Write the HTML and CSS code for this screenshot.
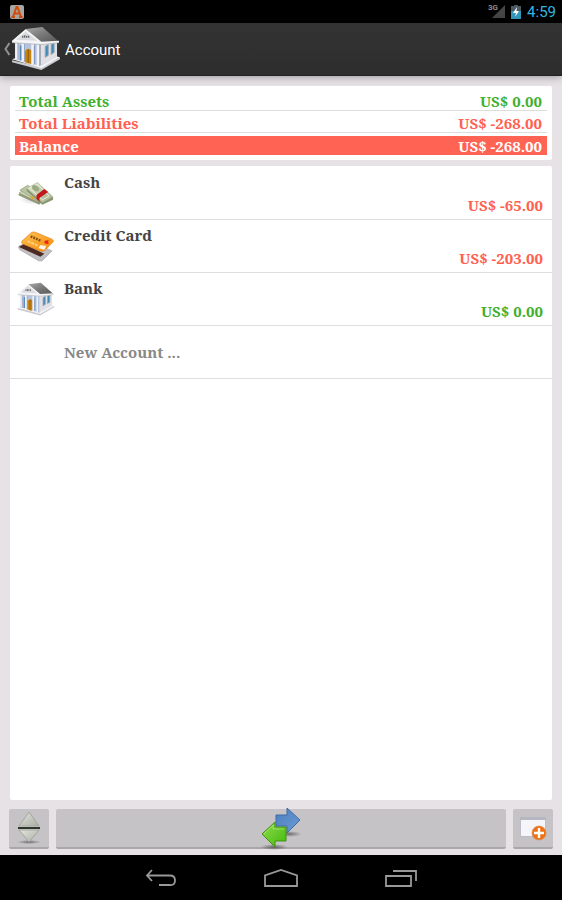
FILE: index.html
```html
<!DOCTYPE html>
<html lang="en">
<head>
<meta charset="utf-8">
<meta name="viewport" content="width=device-width, initial-scale=1">
<title>Account</title>
<link rel="stylesheet" href="styles.css">
</head>
<body>
<svg class="defs" aria-hidden="true">
  <defs>
    <linearGradient id="roof" x1="0" y1="0" x2="1" y2="1"><stop offset="0" stop-color="#aaa"/><stop offset=".5" stop-color="#777"/><stop offset="1" stop-color="#555"/></linearGradient>
    <linearGradient id="money" x1="0" y1="0" x2="1" y2="1"><stop offset="0" stop-color="#dbe2c8"/><stop offset="1" stop-color="#a5b18d"/></linearGradient>
    <linearGradient id="gold" x1="0" y1="0" x2="1" y2="1"><stop offset="0" stop-color="#ffc252"/><stop offset="1" stop-color="#f68b0c"/></linearGradient>
    <linearGradient id="blue" x1="0" y1="0" x2="1" y2="1"><stop offset="0" stop-color="#4a7ec0"/><stop offset="1" stop-color="#6e9cd3"/></linearGradient>
    <linearGradient id="green" x1="0" y1="0" x2="1" y2="1"><stop offset="0" stop-color="#8fdc4c"/><stop offset="1" stop-color="#43b80d"/></linearGradient>
    <linearGradient id="stone" x1="0" y1="0" x2="1" y2="1"><stop offset="0" stop-color="#e4e6de"/><stop offset="1" stop-color="#a9ada2"/></linearGradient>
    <radialGradient id="shade"><stop offset="0" stop-color="#000" stop-opacity=".45"/><stop offset="1" stop-color="#000" stop-opacity="0"/></radialGradient>
  </defs>
  <symbol id="bank" viewBox="0 0 51 45">
    <path d="M1 34l30 7 19-10v2L31 44 1 36z" fill="#c9cbd0"/>
    <path d="M1 33l6-2 24 8 15-9 4 1-19 11z" fill="#f5f5f7"/>
    <path d="M4 14h26v26L4 33z" fill="#b4c4dc"/>
    <path d="M30 15l17-1v17L30 40z" fill="#e0e0e5"/>
    <path d="M14 36V25q3-5 7-1v14z" fill="#c98410"/><path d="M17.500 23v14" stroke="#7b4a05" stroke-width=".8"/>
    <path d="M10 19v15M23 20v18" stroke="#5b86b8" stroke-width="2"/>
    <path d="M5.500 15v18M12 16v19M22 17v21M27.500 17v23" stroke="#f1f3f8" stroke-width="2.600"/>
    <path d="M7 15v18M13.700 16v19M24 17v21M29.300 17v23" stroke="#8398bb" stroke-width=".7"/>
    <path d="M35 20l3-2v11l-3 2zM41 18l3-2v10l-3 2z" fill="#4389b7" stroke="#97a1ae" stroke-width="1"/>
    <path d="M15 2L32 0l17 15-18 1z" fill="url(#roof)"/>
    <path d="M15 2L1 14v2l30 2 18-2v-2l-18 1z" fill="#f5f5f7"/>
    <path d="M15 4.500L5 13l22 1z" fill="#d9dbe0"/>
    <path d="M12 9v2M14 8.500V11M16 9v2M18 9v2" stroke="#555" stroke-width="1.200"/>
    <path d="M1 16l30 2 18-2" fill="none" stroke="#a8abb3" stroke-width=".7"/>
  </symbol>
</svg>

<div class="screen">
  <div class="status">
    <svg class="app-badge" viewBox="0 0 16 16" aria-hidden="true"><rect x="1" y="1" width="14" height="14" rx="2" fill="#aaa6a2"/><path d="M4 13L7.500 3h1L12 13M5 9.500h6M2.500 13H6M10 13h3.500" fill="none" stroke="#cf4d0b" stroke-width="2"/></svg>
    <div class="status-right">
      <span class="network">3G</span>
      <svg class="signal" viewBox="0 0 14 15" aria-hidden="true"><path d="M14 1v13H1z" fill="#454545"/></svg>
      <svg class="battery" viewBox="0 0 10 16" aria-hidden="true"><path d="M3 1h4v1h3v6H0V2h3z" fill="#4b5960"/><path d="M0 7h10v8H0z" fill="#3497bd"/><path d="M6 3L2 9h3l-1 4 4-6H5.500z" fill="#fff"/></svg>
      <time class="clock">4:59</time>
    </div>
  </div>

  <header class="bar">
    <a class="up" href="#" aria-label="Back">
      <svg class="chevron" viewBox="0 0 8 14" aria-hidden="true"><path d="M6.500 1L2.500 7l4 6" fill="none" stroke="#929292" stroke-width="2"/></svg>
      <svg class="bank-large" aria-hidden="true"><use href="#bank"/></svg>
    </a>
    <h1>Account</h1>
  </header>

  <main>
    <dl class="summary">
      <div class="total positive"><dt>Total Assets</dt><dd>US$ 0.00</dd></div>
      <div class="total negative"><dt>Total Liabilities</dt><dd>US$ -268.00</dd></div>
      <div class="total balance"><dt>Balance</dt><dd>US$ -268.00</dd></div>
    </dl>

    <ul class="accounts">
      <li><a class="account" href="#">
        <svg class="icon" viewBox="0 0 39 35" aria-hidden="true">
          <ellipse cx="19" cy="23" rx="17" ry="6" fill="url(#shade)" opacity=".5"/>
          <path d="M1 19L9 12l19 8-5 9z" fill="#8d9877"/><path d="M2 17l9-6 18 10-8 5z" fill="#cdd6b8" stroke="#8a9470" stroke-width=".6"/>
          <path d="M3 14l8-5 17 12-6 5z" fill="#b9c4a0" stroke="#8a9470" stroke-width=".6"/>
          <path d="M10 12l11-6 16 15v3l-11 5L10 15z" fill="#88966f"/>
          <path d="M10 12l11-6 16 15-11 6z" fill="url(#money)"/>
          <path d="M13 12l8-4 12 12-7 4z" fill="none" stroke="#eef1dc"/><ellipse cx="19" cy="12" rx="4" ry="2.500" fill="#9aa983" transform="rotate(35 19 12)"/>
          <path d="M20 19l8-6 4 3-9 6v4l-3-3z" fill="#c2181b"/><path d="M14 20l3 1v3l-3-2z" fill="#eca31a"/>
        </svg>
        <span class="name">Cash</span><span class="amount negative">US$ -65.00</span></a></li>
      <li><a class="account" href="#">
        <svg class="icon" viewBox="0 0 39 35" aria-hidden="true">
          <path d="M2 17l12-5 22 10-10 10q-2 1-4 0L3 21q-2-2-1-4z" fill="#c0c0c4" stroke="#96969a" stroke-width=".5"/>
          <path d="M2 18l22 10 4-3L7 15z" fill="#4d2923"/>
          <path d="M5 12L15 3q2-1 4 0l17 7q2 1 1 3L28 22q-2 1-4 0L6 15q-2-1-1-3z" fill="url(#gold)" stroke="#e07b08" stroke-width=".6"/>
          <path d="M14 7l11 5" stroke="#865015" stroke-width="2.500" stroke-dasharray="2 1"/>
          <path d="M11 12l11 5" stroke="#ffdc91" stroke-width="1.500" stroke-dasharray="3 1"/>
          <path d="M24 16l6 1-2 4-6-2z" fill="#fff3e2"/><ellipse cx="31" cy="13" rx="3" ry="2" fill="#e42a16"/><ellipse cx="34" cy="13" rx="2" ry="2" fill="#ff9f19"/>
        </svg>
        <span class="name">Credit Card</span><span class="amount negative">US$ -203.00</span></a></li>
      <li><a class="account" href="#">
        <svg class="icon" aria-hidden="true"><use href="#bank"/></svg>
        <span class="name">Bank</span><span class="amount positive">US$ 0.00</span></a></li>
      <li><button class="new-account" type="button">New Account ...</button></li>
    </ul>
  </main>

  <footer class="tools">
    <button class="tool" type="button" aria-label="Sort">
      <svg class="sort" viewBox="0 0 24 34" aria-hidden="true"><ellipse cx="12" cy="31" rx="12" ry="2" fill="url(#shade)"/><path d="M2 15L12 1l10 14z" fill="url(#stone)" stroke="#a3a6a0"/><path d="M2 19h20L12 31z" fill="url(#stone)" stroke="#a3a6a0"/><path d="M1 15h22v4H1z" fill="#b9beb7"/><path d="M1 16h22v2H1z" fill="#30362f"/></svg>
    </button>
    <button class="tool" type="button" aria-label="Transfer">
      <svg class="transfer" viewBox="0 0 44 44" aria-hidden="true"><ellipse cx="30" cy="28" rx="13" ry="3" fill="url(#shade)"/><ellipse cx="15" cy="41" rx="14" ry="3" fill="url(#shade)"/><path d="M17 9h11V2l13 12-13 13v-7H17z" fill="url(#blue)" stroke="#3d6ba6"/><path d="M27 21H16v-5L3 28l13 13v-6h11z" fill="url(#green)" stroke="#41920f"/><path d="M25 23H14v-4L5 28" fill="none" stroke="#b8ef89" opacity=".6"/></svg>
    </button>
    <button class="tool" type="button" aria-label="Add window">
      <svg class="add" viewBox="0 0 28 26" aria-hidden="true"><rect x="1" y="2" width="26" height="20" rx="1" fill="#bcbdc8"/><path d="M1 2h26v3H1z" fill="#b4b6c2"/><path d="M2 5h24v16H2z" fill="#f6f6fa"/><circle cx="20" cy="18" r="7" fill="#ef7015" stroke="#dc8d50" stroke-width=".7"/><path d="M20 13v10M15 18h10" stroke="#fff" stroke-width="2.400"/></svg>
    </button>
  </footer>

  <nav class="system" aria-label="System">
    <button type="button" aria-label="Back"><svg viewBox="0 0 34 20" aria-hidden="true"><path d="M8 2L3 7.500 8 13M3 7.500h23q5 0 5 5t-5 4.500H15" fill="none" stroke="#999" stroke-width="1.800"/></svg></button>
    <button type="button" aria-label="Home"><svg viewBox="0 0 34 20" aria-hidden="true"><path d="M1 18V7.500L17 2l16 5.500V18z" fill="none" stroke="#999" stroke-width="1.800"/></svg></button>
    <button type="button" aria-label="Recent apps"><svg viewBox="0 0 34 20" aria-hidden="true"><path d="M2 8h25v10H2zM9 3h23v10" fill="none" stroke="#999" stroke-width="1.800"/></svg></button>
  </nav>
</div>
</body>
</html>
```

FILE: styles.css
```css
* { box-sizing: border-box; }
body { margin: 0; background: #e7e2e6; font-family: Roboto, sans-serif; }
.defs { position: absolute; width: 0; height: 0; }
.screen { min-height: 100vh; display: flex; flex-direction: column; }
svg { display: block; flex: none; }
button { font: inherit; border: 0; padding: 0; margin: 0; background: none; cursor: pointer; }
a { color: inherit; text-decoration: none; }

.status { height: 23px; padding: 0 6px 0 9px; background: #000; display: flex; align-items: center; justify-content: space-between; }
.app-badge { width: 16px; height: 16px; }
.status-right { display: flex; align-items: center; }
.network { color: #8c8c8c; font-size: 8px; font-weight: 700; line-height: 16px; align-self: flex-start; margin-right: -7px; }
.signal { width: 14px; height: 15px; margin-right: 6px; }
.battery { width: 10px; height: 16px; margin-right: 6px; }
.clock { color: #33b5e5; font-size: 15px; line-height: 24px; }

.bar { height: 53px; background: linear-gradient(#333, #2d2d2d); border-bottom: 1px solid #222; display: flex; align-items: center; gap: 4px; padding-left: 3px; box-shadow: 0 1px 8px rgba(0, 0, 0, .35); }
.up { display: flex; align-items: center; }
.chevron { width: 8px; height: 14px; }
.bank-large { width: 50px; height: 44px; }
h1 { margin: 0; color: #fff; font-size: 15px; font-weight: 400; line-height: 20px; padding-top: 2px; }

main { flex: 1; display: flex; flex-direction: column; gap: 6px; padding: 10px 10px 9px; }
.summary, .accounts { margin: 0; background: #fff; border-radius: 2px; font-family: "Droid Serif", "Noto Serif", "DejaVu Serif Condensed", "DejaVu Serif", serif; font-weight: 700; font-size: 15px; line-height: 20px; }
.summary { padding: 5px; }
.total { display: flex; justify-content: space-between; height: 20px; padding: 0 5px 0 4px; border-bottom: 1px solid #ddd; margin-bottom: 2px; line-height: 20px; }
dt, dd { margin: 0; }
.total.balance { background: #ff6353; color: #fff; border: 0; margin: 3px 0 0; height: 19px; }
.positive { color: #42b02f; }
.negative { color: #ff604f; }

.accounts { flex: 1; padding: 1px 0 0; list-style: none; }
.accounts li { border-bottom: 1px solid #ddd; }
.account { min-height: 52px; display: grid; grid-template-columns: 40px 1fr; grid-template-rows: 23px 23px; column-gap: 7px; padding: 5px 9px 0 7px; }
.icon { width: 38px; height: 35px; grid-row: 1 / 3; align-self: start; margin-top: 4px; }
.name { color: #444; }
.amount { grid-column: 2; justify-self: end; }
.new-account { display: block; width: 100%; min-height: 52px; padding-left: 54px; text-align: left; color: #888; }

.tools { display: grid; grid-template-columns: 40px 1fr 40px; gap: 7px; padding: 0 9px 6px; }
.tool { height: 40px; background: #c6c3c6; border-bottom: 2px solid #aaa7aa; border-radius: 2px; display: flex; align-items: center; justify-content: center; }
.sort { width: 24px; height: 34px; }
.transfer { width: 44px; height: 44px; }
.add { width: 28px; height: 26px; }

.system { height: 45px; background: #000; display: flex; align-items: center; justify-content: center; gap: 86px; }
.system svg { width: 34px; height: 20px; }
```
